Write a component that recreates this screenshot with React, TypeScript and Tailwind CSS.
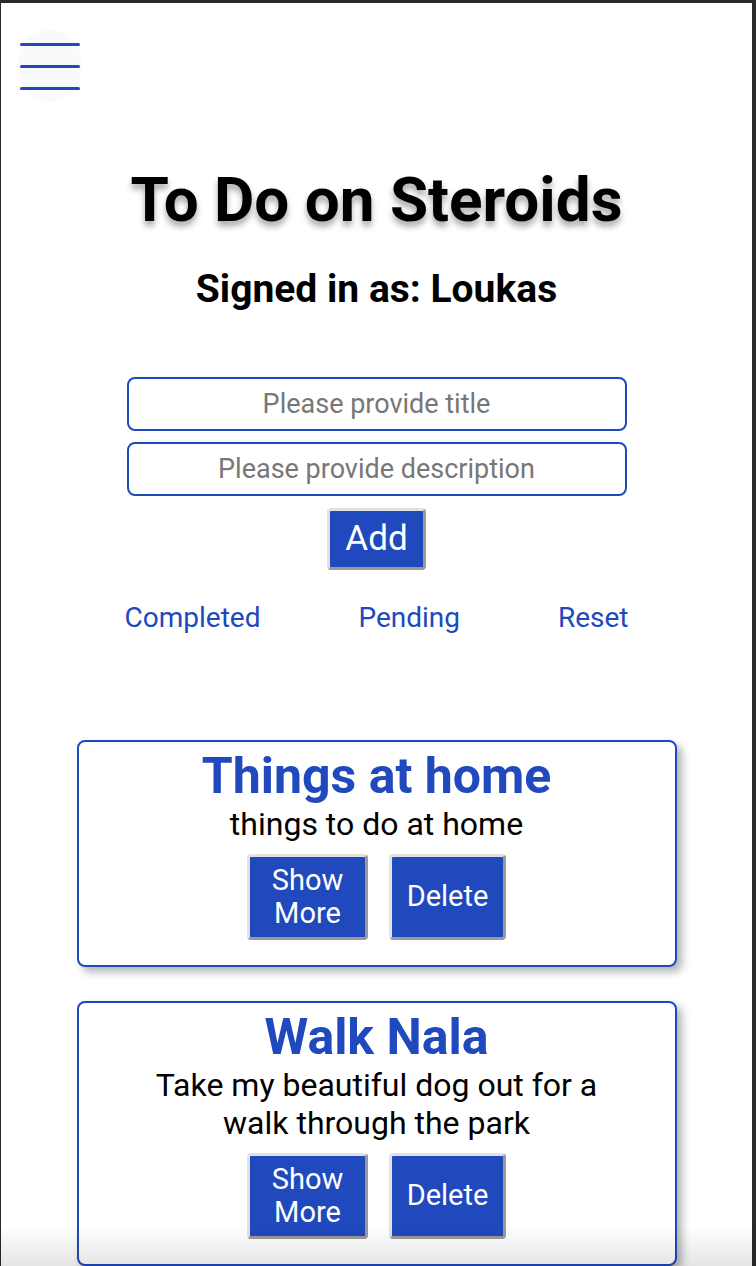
import React from "react";

const blue = "text-[#2049bd]";

const Bevel =
  "border-[3px] border-t-[#e2e2e2] border-l-[#e2e2e2] border-b-[#9a9a9a] border-r-[#9a9a9a] rounded-[4px] bg-[#2049bd] text-white";

type Todo = { title: string; description: string };

const todos: Todo[] = [
  { title: "Things at home", description: "things to do at home" },
  { title: "Walk Nala", description: "Take my beautiful dog out for a walk through the park" },
];

const TodoCard: React.FC<{ todo: Todo }> = ({ todo }) => (
  <div className="w-[600px] rounded-lg border-2 border-[#2049bd] bg-white pt-[5px] pb-[25px] shadow-[5px_5px_8px_rgba(0,0,0,0.3)] flex flex-col items-center">
    <h2 className={`text-[50px] leading-[58px] font-bold ${blue}`}>{todo.title}</h2>
    <p className="text-[32px] leading-[38px] text-black text-center max-w-[480px]">{todo.description}</p>
    <div className="mt-[11px] flex gap-[21px]">
      <button className={`${Bevel} w-[121px] h-[86px] text-[29px] leading-[33px]`}>
        Show
        <br />
        More
      </button>
      <button className={`${Bevel} w-[117px] h-[86px] text-[29px]`}>Delete</button>
    </div>
  </div>
);

export default function App() {
  return (
    <div className="min-h-screen bg-white border-t-[3px] border-l border-r-4 border-[#2a2a2a] font-['Roboto',sans-serif]">
      <div className="pl-[18px] pt-[27px]">
        <button className="w-[62px] h-[72px] rounded-full bg-[#fafafa] flex flex-col justify-center gap-[19px] items-center">
          <span className="block w-[60px] h-[3px] rounded bg-[#2049bd]" />
          <span className="block w-[60px] h-[3px] rounded bg-[#2049bd]" />
          <span className="block w-[60px] h-[3px] rounded bg-[#2049bd]" />
        </button>
      </div>

      <h1 className="mt-[63px] text-center text-[62px] leading-[70px] font-bold text-black [text-shadow:0_5px_6px_rgba(0,0,0,0.35)]">
        To Do on Steroids
      </h1>
      <h3 className="mt-[34px] text-center text-[39px] leading-[40px] font-bold text-black">
        Signed in as: Loukas
      </h3>

      <div className="mt-[68px] mx-auto w-[500px] flex flex-col gap-[11px]">
        <input
          placeholder="Please provide title"
          className="h-[54px] w-full rounded-lg border-2 border-[#2049bd] text-center text-[27px] placeholder:text-[#777] outline-none"
        />
        <input
          placeholder="Please provide description"
          className="h-[54px] w-full rounded-lg border-2 border-[#2049bd] text-center text-[27px] placeholder:text-[#777] outline-none"
        />
      </div>
      <div className="mt-[12px] flex justify-center">
        <button className={`${Bevel} w-[99px] h-[62px] text-[35px]`}>Add</button>
      </div>

      <div className={`mt-[30px] mx-auto w-[504px] flex justify-between text-[28px] leading-[36px] ${blue}`}>
        <button>Completed</button>
        <button>Pending</button>
        <button>Reset</button>
      </div>

      <div className="mt-[104px] flex flex-col items-center gap-[34px] pb-10">
        {todos.map((t) => (
          <TodoCard key={t.title} todo={t} />
        ))}
      </div>

      <div className="pointer-events-none fixed bottom-0 left-0 right-0 h-[40px] bg-gradient-to-b from-transparent to-[rgba(0,0,0,0.1)]" />
    </div>
  );
}
